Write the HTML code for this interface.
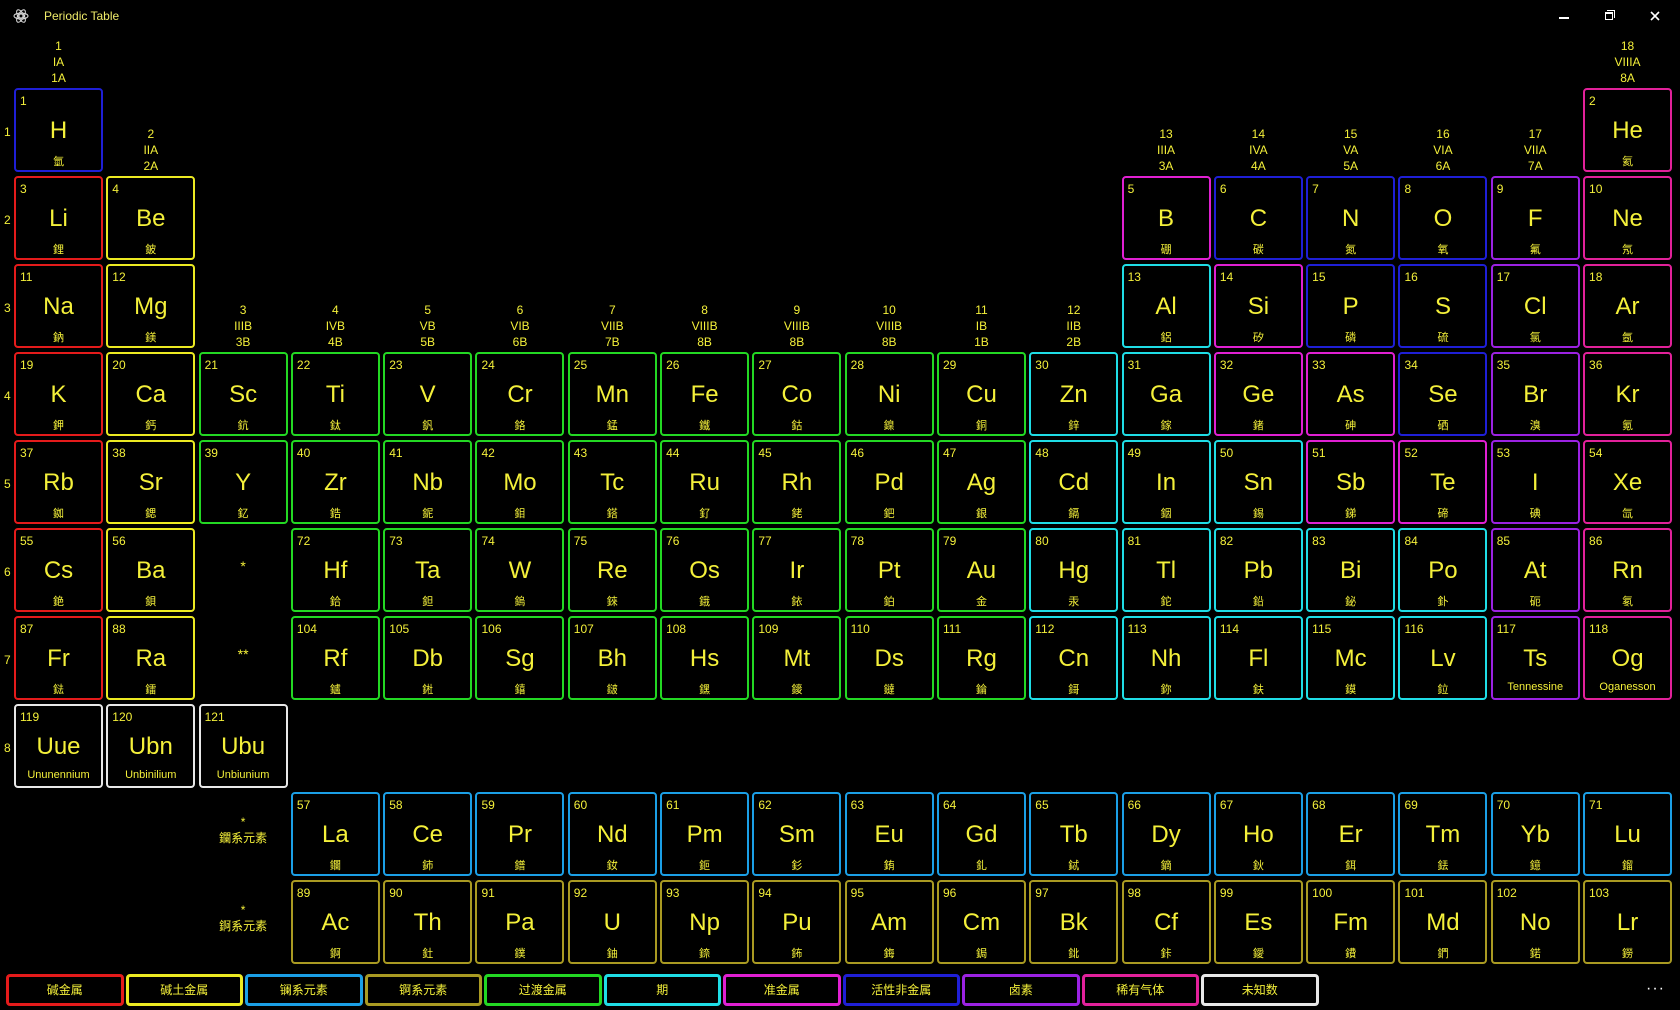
<!DOCTYPE html>
<html><head><meta charset="utf-8"><style>
*{margin:0;padding:0;box-sizing:border-box}
body{width:1680px;height:1010px;background:#000;overflow:hidden;font-family:"Liberation Sans","Noto Sans CJK TC","Noto Sans CJK SC",sans-serif;color:#f4f03a;position:relative}
.title{position:absolute;left:44px;top:9px;font-size:12px;color:#f0ec6a}
.grid{position:absolute;left:14px;top:0;display:grid;grid-template-columns:repeat(18,89px);column-gap:3.3px;grid-template-rows:repeat(11,84px);row-gap:4px}
.c{border:2.5px solid #fff;border-radius:4px;position:relative}
.c .n{position:absolute;left:4px;top:4px;font-size:12px}
.c .s{position:absolute;left:0;right:0;top:27px;text-align:center;font-size:24px}
.c .m{position:absolute;left:0;right:0;top:63px;text-align:center;font-size:11px}
.g{display:flex;flex-direction:column;justify-content:flex-end;text-align:center;font-size:12px;line-height:16px;margin-bottom:-2px}
.st{text-align:center;font-size:14px;padding-top:30px}
.lb{text-align:center;font-size:12px;padding-top:22px;line-height:16px}
.p{position:absolute;left:4px;width:10px;font-size:12px}
.k{border-color:#e51b1b !important}.a{border-color:#ecea22 !important}.t{border-color:#23d823 !important}.pt{border-color:#1fdde6 !important}
.md{border-color:#e020d2 !important}.nm{border-color:#1f1fd6 !important}.h{border-color:#9b22e2 !important}.ng{border-color:#e2219a !important}
.ln{border-color:#1b9fe6 !important}.ac{border-color:#a99a22 !important}.u{border-color:#e8e8e8 !important}
.leg{position:absolute;top:974px;left:6px;display:flex;gap:2px}
.leg div{width:117.5px;height:32px;border-width:3px;border-style:solid;border-radius:4px;text-align:center;font-size:12px;line-height:26px}
</style></head><body>
<svg style="position:absolute;left:13px;top:8px" width="16" height="16" viewBox="0 0 16 16"><g fill="none" stroke="#ddd" stroke-width="1"><circle cx="8" cy="8" r="2"/><ellipse cx="8" cy="8" rx="7" ry="3"/><ellipse cx="8" cy="8" rx="7" ry="3" transform="rotate(60 8 8)"/><ellipse cx="8" cy="8" rx="7" ry="3" transform="rotate(120 8 8)"/></g></svg>
<div class="title">Periodic Table</div>
<div style="position:absolute;left:1559px;top:17px;width:10px;height:2px;background:#fff"></div>
<div style="position:absolute;left:1605px;top:12px;width:8px;height:8px;border:1px solid #fff;border-top-width:2px"></div>
<div style="position:absolute;left:1607px;top:10px;width:8px;height:8px;border-top:1px solid #fff;border-right:1px solid #fff"></div>
<svg style="position:absolute;left:1650px;top:11px" width="10" height="10"><path d="M1 1L9 9M9 1L1 9" stroke="#fff" stroke-width="1.6"/></svg>

<div class="p" style="top:125px">1</div><div class="p" style="top:213px">2</div><div class="p" style="top:301px">3</div><div class="p" style="top:389px">4</div><div class="p" style="top:477px">5</div><div class="p" style="top:565px">6</div><div class="p" style="top:653px">7</div><div class="p" style="top:741px">8</div>

<div class="grid">
<div class="g" style="grid-area:1/1">1<br>IA<br>1A</div>
<div class="g" style="grid-area:1/18">18<br>VIIIA<br>8A</div>
<div class="g" style="grid-area:2/2">2<br>IIA<br>2A</div>
<div class="g" style="grid-area:2/13">13<br>IIIA<br>3A</div>
<div class="g" style="grid-area:2/14">14<br>IVA<br>4A</div>
<div class="g" style="grid-area:2/15">15<br>VA<br>5A</div>
<div class="g" style="grid-area:2/16">16<br>VIA<br>6A</div>
<div class="g" style="grid-area:2/17">17<br>VIIA<br>7A</div>
<div class="g" style="grid-area:4/3">3<br>IIIB<br>3B</div>
<div class="g" style="grid-area:4/4">4<br>IVB<br>4B</div>
<div class="g" style="grid-area:4/5">5<br>VB<br>5B</div>
<div class="g" style="grid-area:4/6">6<br>VIB<br>6B</div>
<div class="g" style="grid-area:4/7">7<br>VIIB<br>7B</div>
<div class="g" style="grid-area:4/8">8<br>VIIIB<br>8B</div>
<div class="g" style="grid-area:4/9">9<br>VIIIB<br>8B</div>
<div class="g" style="grid-area:4/10">10<br>VIIIB<br>8B</div>
<div class="g" style="grid-area:4/11">11<br>IB<br>1B</div>
<div class="g" style="grid-area:4/12">12<br>IIB<br>2B</div>

<div class="c nm" style="grid-area:2/1"><span class="n">1</span><span class="s">H</span><span class="m">氫</span></div>
<div class="c ng" style="grid-area:2/18"><span class="n">2</span><span class="s">He</span><span class="m">氦</span></div>

<div class="c k" style="grid-area:3/1"><span class="n">3</span><span class="s">Li</span><span class="m">鋰</span></div>
<div class="c a" style="grid-area:3/2"><span class="n">4</span><span class="s">Be</span><span class="m">鈹</span></div>
<div class="c md" style="grid-area:3/13"><span class="n">5</span><span class="s">B</span><span class="m">硼</span></div>
<div class="c nm" style="grid-area:3/14"><span class="n">6</span><span class="s">C</span><span class="m">碳</span></div>
<div class="c nm" style="grid-area:3/15"><span class="n">7</span><span class="s">N</span><span class="m">氮</span></div>
<div class="c nm" style="grid-area:3/16"><span class="n">8</span><span class="s">O</span><span class="m">氧</span></div>
<div class="c h" style="grid-area:3/17"><span class="n">9</span><span class="s">F</span><span class="m">氟</span></div>
<div class="c ng" style="grid-area:3/18"><span class="n">10</span><span class="s">Ne</span><span class="m">氖</span></div>

<div class="c k" style="grid-area:4/1"><span class="n">11</span><span class="s">Na</span><span class="m">鈉</span></div>
<div class="c a" style="grid-area:4/2"><span class="n">12</span><span class="s">Mg</span><span class="m">鎂</span></div>
<div class="c pt" style="grid-area:4/13"><span class="n">13</span><span class="s">Al</span><span class="m">鋁</span></div>
<div class="c md" style="grid-area:4/14"><span class="n">14</span><span class="s">Si</span><span class="m">矽</span></div>
<div class="c nm" style="grid-area:4/15"><span class="n">15</span><span class="s">P</span><span class="m">磷</span></div>
<div class="c nm" style="grid-area:4/16"><span class="n">16</span><span class="s">S</span><span class="m">硫</span></div>
<div class="c h" style="grid-area:4/17"><span class="n">17</span><span class="s">Cl</span><span class="m">氯</span></div>
<div class="c ng" style="grid-area:4/18"><span class="n">18</span><span class="s">Ar</span><span class="m">氬</span></div>

<div class="c k" style="grid-area:5/1"><span class="n">19</span><span class="s">K</span><span class="m">鉀</span></div>
<div class="c a" style="grid-area:5/2"><span class="n">20</span><span class="s">Ca</span><span class="m">鈣</span></div>
<div class="c t" style="grid-area:5/3"><span class="n">21</span><span class="s">Sc</span><span class="m">鈧</span></div>
<div class="c t" style="grid-area:5/4"><span class="n">22</span><span class="s">Ti</span><span class="m">鈦</span></div>
<div class="c t" style="grid-area:5/5"><span class="n">23</span><span class="s">V</span><span class="m">釩</span></div>
<div class="c t" style="grid-area:5/6"><span class="n">24</span><span class="s">Cr</span><span class="m">鉻</span></div>
<div class="c t" style="grid-area:5/7"><span class="n">25</span><span class="s">Mn</span><span class="m">錳</span></div>
<div class="c t" style="grid-area:5/8"><span class="n">26</span><span class="s">Fe</span><span class="m">鐵</span></div>
<div class="c t" style="grid-area:5/9"><span class="n">27</span><span class="s">Co</span><span class="m">鈷</span></div>
<div class="c t" style="grid-area:5/10"><span class="n">28</span><span class="s">Ni</span><span class="m">鎳</span></div>
<div class="c t" style="grid-area:5/11"><span class="n">29</span><span class="s">Cu</span><span class="m">銅</span></div>
<div class="c pt" style="grid-area:5/12"><span class="n">30</span><span class="s">Zn</span><span class="m">鋅</span></div>
<div class="c pt" style="grid-area:5/13"><span class="n">31</span><span class="s">Ga</span><span class="m">鎵</span></div>
<div class="c md" style="grid-area:5/14"><span class="n">32</span><span class="s">Ge</span><span class="m">鍺</span></div>
<div class="c md" style="grid-area:5/15"><span class="n">33</span><span class="s">As</span><span class="m">砷</span></div>
<div class="c nm" style="grid-area:5/16"><span class="n">34</span><span class="s">Se</span><span class="m">硒</span></div>
<div class="c h" style="grid-area:5/17"><span class="n">35</span><span class="s">Br</span><span class="m">溴</span></div>
<div class="c ng" style="grid-area:5/18"><span class="n">36</span><span class="s">Kr</span><span class="m">氪</span></div>

<div class="c k" style="grid-area:6/1"><span class="n">37</span><span class="s">Rb</span><span class="m">銣</span></div>
<div class="c a" style="grid-area:6/2"><span class="n">38</span><span class="s">Sr</span><span class="m">鍶</span></div>
<div class="c t" style="grid-area:6/3"><span class="n">39</span><span class="s">Y</span><span class="m">釔</span></div>
<div class="c t" style="grid-area:6/4"><span class="n">40</span><span class="s">Zr</span><span class="m">鋯</span></div>
<div class="c t" style="grid-area:6/5"><span class="n">41</span><span class="s">Nb</span><span class="m">鈮</span></div>
<div class="c t" style="grid-area:6/6"><span class="n">42</span><span class="s">Mo</span><span class="m">鉬</span></div>
<div class="c t" style="grid-area:6/7"><span class="n">43</span><span class="s">Tc</span><span class="m">鎝</span></div>
<div class="c t" style="grid-area:6/8"><span class="n">44</span><span class="s">Ru</span><span class="m">釕</span></div>
<div class="c t" style="grid-area:6/9"><span class="n">45</span><span class="s">Rh</span><span class="m">銠</span></div>
<div class="c t" style="grid-area:6/10"><span class="n">46</span><span class="s">Pd</span><span class="m">鈀</span></div>
<div class="c t" style="grid-area:6/11"><span class="n">47</span><span class="s">Ag</span><span class="m">銀</span></div>
<div class="c pt" style="grid-area:6/12"><span class="n">48</span><span class="s">Cd</span><span class="m">鎘</span></div>
<div class="c pt" style="grid-area:6/13"><span class="n">49</span><span class="s">In</span><span class="m">銦</span></div>
<div class="c pt" style="grid-area:6/14"><span class="n">50</span><span class="s">Sn</span><span class="m">錫</span></div>
<div class="c md" style="grid-area:6/15"><span class="n">51</span><span class="s">Sb</span><span class="m">銻</span></div>
<div class="c md" style="grid-area:6/16"><span class="n">52</span><span class="s">Te</span><span class="m">碲</span></div>
<div class="c h" style="grid-area:6/17"><span class="n">53</span><span class="s">I</span><span class="m">碘</span></div>
<div class="c ng" style="grid-area:6/18"><span class="n">54</span><span class="s">Xe</span><span class="m">氙</span></div>

<div class="c k" style="grid-area:7/1"><span class="n">55</span><span class="s">Cs</span><span class="m">銫</span></div>
<div class="c a" style="grid-area:7/2"><span class="n">56</span><span class="s">Ba</span><span class="m">鋇</span></div>
<div class="st" style="grid-area:7/3">*</div>
<div class="c t" style="grid-area:7/4"><span class="n">72</span><span class="s">Hf</span><span class="m">鉿</span></div>
<div class="c t" style="grid-area:7/5"><span class="n">73</span><span class="s">Ta</span><span class="m">鉭</span></div>
<div class="c t" style="grid-area:7/6"><span class="n">74</span><span class="s">W</span><span class="m">鎢</span></div>
<div class="c t" style="grid-area:7/7"><span class="n">75</span><span class="s">Re</span><span class="m">錸</span></div>
<div class="c t" style="grid-area:7/8"><span class="n">76</span><span class="s">Os</span><span class="m">鋨</span></div>
<div class="c t" style="grid-area:7/9"><span class="n">77</span><span class="s">Ir</span><span class="m">銥</span></div>
<div class="c t" style="grid-area:7/10"><span class="n">78</span><span class="s">Pt</span><span class="m">鉑</span></div>
<div class="c t" style="grid-area:7/11"><span class="n">79</span><span class="s">Au</span><span class="m">金</span></div>
<div class="c pt" style="grid-area:7/12"><span class="n">80</span><span class="s">Hg</span><span class="m">汞</span></div>
<div class="c pt" style="grid-area:7/13"><span class="n">81</span><span class="s">Tl</span><span class="m">鉈</span></div>
<div class="c pt" style="grid-area:7/14"><span class="n">82</span><span class="s">Pb</span><span class="m">鉛</span></div>
<div class="c pt" style="grid-area:7/15"><span class="n">83</span><span class="s">Bi</span><span class="m">鉍</span></div>
<div class="c pt" style="grid-area:7/16"><span class="n">84</span><span class="s">Po</span><span class="m">釙</span></div>
<div class="c h" style="grid-area:7/17"><span class="n">85</span><span class="s">At</span><span class="m">砈</span></div>
<div class="c ng" style="grid-area:7/18"><span class="n">86</span><span class="s">Rn</span><span class="m">氡</span></div>

<div class="c k" style="grid-area:8/1"><span class="n">87</span><span class="s">Fr</span><span class="m">鍅</span></div>
<div class="c a" style="grid-area:8/2"><span class="n">88</span><span class="s">Ra</span><span class="m">鐳</span></div>
<div class="st" style="grid-area:8/3">**</div>
<div class="c t" style="grid-area:8/4"><span class="n">104</span><span class="s">Rf</span><span class="m">鑪</span></div>
<div class="c t" style="grid-area:8/5"><span class="n">105</span><span class="s">Db</span><span class="m">𨧀</span></div>
<div class="c t" style="grid-area:8/6"><span class="n">106</span><span class="s">Sg</span><span class="m">𨭎</span></div>
<div class="c t" style="grid-area:8/7"><span class="n">107</span><span class="s">Bh</span><span class="m">𨨏</span></div>
<div class="c t" style="grid-area:8/8"><span class="n">108</span><span class="s">Hs</span><span class="m">𨭆</span></div>
<div class="c t" style="grid-area:8/9"><span class="n">109</span><span class="s">Mt</span><span class="m">䥑</span></div>
<div class="c t" style="grid-area:8/10"><span class="n">110</span><span class="s">Ds</span><span class="m">鐽</span></div>
<div class="c t" style="grid-area:8/11"><span class="n">111</span><span class="s">Rg</span><span class="m">錀</span></div>
<div class="c pt" style="grid-area:8/12"><span class="n">112</span><span class="s">Cn</span><span class="m">鎶</span></div>
<div class="c pt" style="grid-area:8/13"><span class="n">113</span><span class="s">Nh</span><span class="m">鉨</span></div>
<div class="c pt" style="grid-area:8/14"><span class="n">114</span><span class="s">Fl</span><span class="m">鈇</span></div>
<div class="c pt" style="grid-area:8/15"><span class="n">115</span><span class="s">Mc</span><span class="m">鏌</span></div>
<div class="c pt" style="grid-area:8/16"><span class="n">116</span><span class="s">Lv</span><span class="m">鉝</span></div>
<div class="c h" style="grid-area:8/17"><span class="n">117</span><span class="s">Ts</span><span class="m">Tennessine</span></div>
<div class="c ng" style="grid-area:8/18"><span class="n">118</span><span class="s">Og</span><span class="m">Oganesson</span></div>

<div class="c u" style="grid-area:9/1"><span class="n">119</span><span class="s">Uue</span><span class="m">Ununennium</span></div>
<div class="c u" style="grid-area:9/2"><span class="n">120</span><span class="s">Ubn</span><span class="m">Unbinilium</span></div>
<div class="c u" style="grid-area:9/3"><span class="n">121</span><span class="s">Ubu</span><span class="m">Unbiunium</span></div>

<div class="lb" style="grid-area:10/3">*<br>鑭系元素</div>
<div class="c ln" style="grid-area:10/4"><span class="n">57</span><span class="s">La</span><span class="m">鑭</span></div>
<div class="c ln" style="grid-area:10/5"><span class="n">58</span><span class="s">Ce</span><span class="m">鈰</span></div>
<div class="c ln" style="grid-area:10/6"><span class="n">59</span><span class="s">Pr</span><span class="m">鐠</span></div>
<div class="c ln" style="grid-area:10/7"><span class="n">60</span><span class="s">Nd</span><span class="m">釹</span></div>
<div class="c ln" style="grid-area:10/8"><span class="n">61</span><span class="s">Pm</span><span class="m">鉕</span></div>
<div class="c ln" style="grid-area:10/9"><span class="n">62</span><span class="s">Sm</span><span class="m">釤</span></div>
<div class="c ln" style="grid-area:10/10"><span class="n">63</span><span class="s">Eu</span><span class="m">銪</span></div>
<div class="c ln" style="grid-area:10/11"><span class="n">64</span><span class="s">Gd</span><span class="m">釓</span></div>
<div class="c ln" style="grid-area:10/12"><span class="n">65</span><span class="s">Tb</span><span class="m">鋱</span></div>
<div class="c ln" style="grid-area:10/13"><span class="n">66</span><span class="s">Dy</span><span class="m">鏑</span></div>
<div class="c ln" style="grid-area:10/14"><span class="n">67</span><span class="s">Ho</span><span class="m">鈥</span></div>
<div class="c ln" style="grid-area:10/15"><span class="n">68</span><span class="s">Er</span><span class="m">鉺</span></div>
<div class="c ln" style="grid-area:10/16"><span class="n">69</span><span class="s">Tm</span><span class="m">銩</span></div>
<div class="c ln" style="grid-area:10/17"><span class="n">70</span><span class="s">Yb</span><span class="m">鐿</span></div>
<div class="c ln" style="grid-area:10/18"><span class="n">71</span><span class="s">Lu</span><span class="m">鎦</span></div>

<div class="lb" style="grid-area:11/3">*<br>錒系元素</div>
<div class="c ac" style="grid-area:11/4"><span class="n">89</span><span class="s">Ac</span><span class="m">錒</span></div>
<div class="c ac" style="grid-area:11/5"><span class="n">90</span><span class="s">Th</span><span class="m">釷</span></div>
<div class="c ac" style="grid-area:11/6"><span class="n">91</span><span class="s">Pa</span><span class="m">鏷</span></div>
<div class="c ac" style="grid-area:11/7"><span class="n">92</span><span class="s">U</span><span class="m">鈾</span></div>
<div class="c ac" style="grid-area:11/8"><span class="n">93</span><span class="s">Np</span><span class="m">錼</span></div>
<div class="c ac" style="grid-area:11/9"><span class="n">94</span><span class="s">Pu</span><span class="m">鈽</span></div>
<div class="c ac" style="grid-area:11/10"><span class="n">95</span><span class="s">Am</span><span class="m">鋂</span></div>
<div class="c ac" style="grid-area:11/11"><span class="n">96</span><span class="s">Cm</span><span class="m">鋦</span></div>
<div class="c ac" style="grid-area:11/12"><span class="n">97</span><span class="s">Bk</span><span class="m">鉳</span></div>
<div class="c ac" style="grid-area:11/13"><span class="n">98</span><span class="s">Cf</span><span class="m">鉲</span></div>
<div class="c ac" style="grid-area:11/14"><span class="n">99</span><span class="s">Es</span><span class="m">鑀</span></div>
<div class="c ac" style="grid-area:11/15"><span class="n">100</span><span class="s">Fm</span><span class="m">鐨</span></div>
<div class="c ac" style="grid-area:11/16"><span class="n">101</span><span class="s">Md</span><span class="m">鍆</span></div>
<div class="c ac" style="grid-area:11/17"><span class="n">102</span><span class="s">No</span><span class="m">鍩</span></div>
<div class="c ac" style="grid-area:11/18"><span class="n">103</span><span class="s">Lr</span><span class="m">鐒</span></div>
</div>

<div class="leg">
<div class="k">碱金属</div><div class="a">碱土金属</div><div class="ln">镧系元素</div><div class="ac">锕系元素</div><div class="t">过渡金属</div><div class="pt">期</div><div class="md">准金属</div><div class="nm">活性非金属</div><div class="h">卤素</div><div class="ng">稀有气体</div><div class="u">未知数</div>
</div>
<div style="position:absolute;left:1646px;top:980px;font-size:16px;color:#fff;letter-spacing:1px">···</div>
</body></html>
